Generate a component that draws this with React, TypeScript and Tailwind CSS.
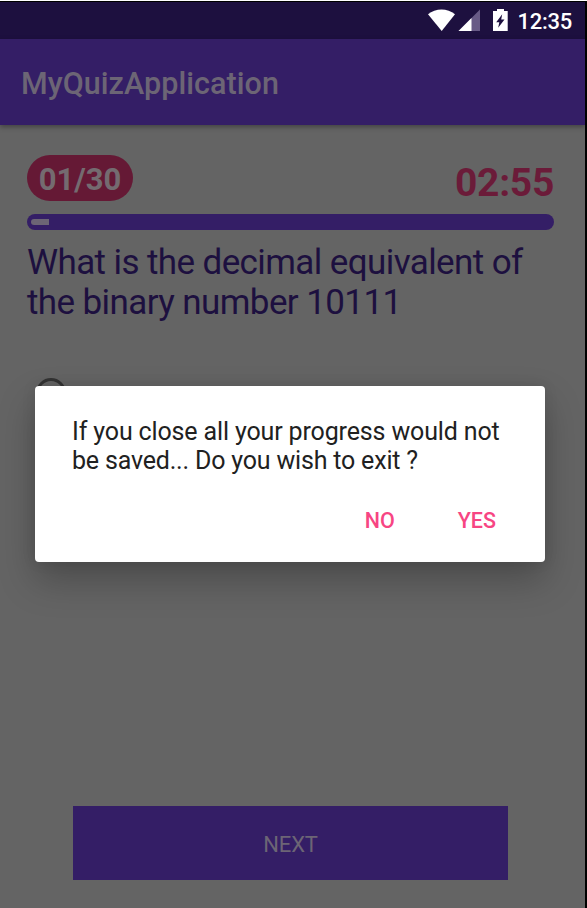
function StatusBar() {
  return (
    <div className="flex h-[37px] shrink-0 items-start justify-end bg-[#1d103f] pr-[13px]">
      <svg className="mt-[7px] h-[23px] w-[82px]" viewBox="0 0 82 23">
        <path d="M0 5.2C7.5-1.2 19.5-1.2 27 5.2L13.7 22Z" fill="#fff" />
        <path d="M52 0.5V22H30.5Z" fill="#685a86" />
        <path d="M43.5 9V22H30.5Z" fill="#fff" />
        <path d="M69 0H76V2H79.7V22H65V2H69Z" fill="#fff" />
        <path d="M74.2 5.2L68.2 13.3H71.3L70.2 18.8L76.5 10.6H73.2Z" fill="#1d103f" />
      </svg>
      <span className="ml-[7px] mt-[6px] text-[22px] leading-[28px] font-medium tracking-[-0.25px] text-white">12:35</span>
    </div>
  );
}

function ExitDialog() {
  return (
    <div className="absolute left-[35px] top-[384px] flex h-[176px] w-[510px] flex-col rounded-[4px] bg-white shadow-[0_18px_36px_rgba(0,0,0,0.25),0_0_14px_rgba(0,0,0,0.1)]">
      <p className="ml-[37px] mt-[31px] text-[25px] leading-[29px] tracking-[-0.14px] whitespace-nowrap text-[#212121]">
        If you close all your progress would not
        <br />
        <span className="tracking-[-0.18px]">be saved... Do you wish to exit ?</span>
      </p>
      <div className="mt-[33px] flex justify-end gap-[63px] pr-[49px] text-[21.5px] leading-[26px] font-medium text-[#f74583]">
        <button>NO</button>
        <button>YES</button>
      </div>
    </div>
  );
}

export default function App() {
  return (
    <div className="h-[908px] w-[587px] overflow-hidden bg-white pt-px font-['Roboto',sans-serif]">
      <div className="relative flex h-[907px] flex-col border-t border-r-2 border-black bg-[#646464]">
        <StatusBar />
        <header className="z-0 flex h-[86px] shrink-0 items-center bg-[#341e66] pl-[21px] pt-[4px] text-[30.5px] font-medium tracking-[0.05px] text-[#6c6575] shadow-[0_2px_5px_rgba(0,0,0,0.35)]">
          MyQuizApplication
        </header>
        <main className="flex grow flex-col pr-[31px] pl-[27px] pt-[30px]">
          <div className="flex h-[46px] items-center justify-between font-bold">
            <span className="flex h-[46px] w-[106px] items-center justify-center rounded-full bg-[#651935] pt-[5px] text-[31px] text-[#746b70]">
              01/30
            </span>
            <span className="pt-[9px] text-[39px] leading-[46px] tracking-[-0.3px] text-[#6b1b39]">02:55</span>
          </div>
          <div className="mt-[13px] flex h-[16px] shrink-0 items-center rounded-full bg-[#341e66] pl-[4px]">
            <div className="h-[6px] w-[18px] rounded-l-[3px] bg-[#6c6575]" />
          </div>
          <h1 className="mt-[13px] text-[35px] leading-[40px] tracking-[-0.6px] whitespace-nowrap text-[#1d103f]">
            What is the decimal equivalent of
            <br />
            the binary number 10111
          </h1>
          <div className="ml-[9px] mt-[55px] h-[30px] w-[30px] shrink-0 rounded-full border-[3px] border-[#333333]" />
          <button className="mx-[46px] mt-auto mb-[28px] h-[74px] shrink-0 bg-[#341e66] pt-[2px] text-[22px] tracking-[-0.2px] text-[#6c6575]">
            NEXT
          </button>
        </main>
        <ExitDialog />
      </div>
    </div>
  );
}
